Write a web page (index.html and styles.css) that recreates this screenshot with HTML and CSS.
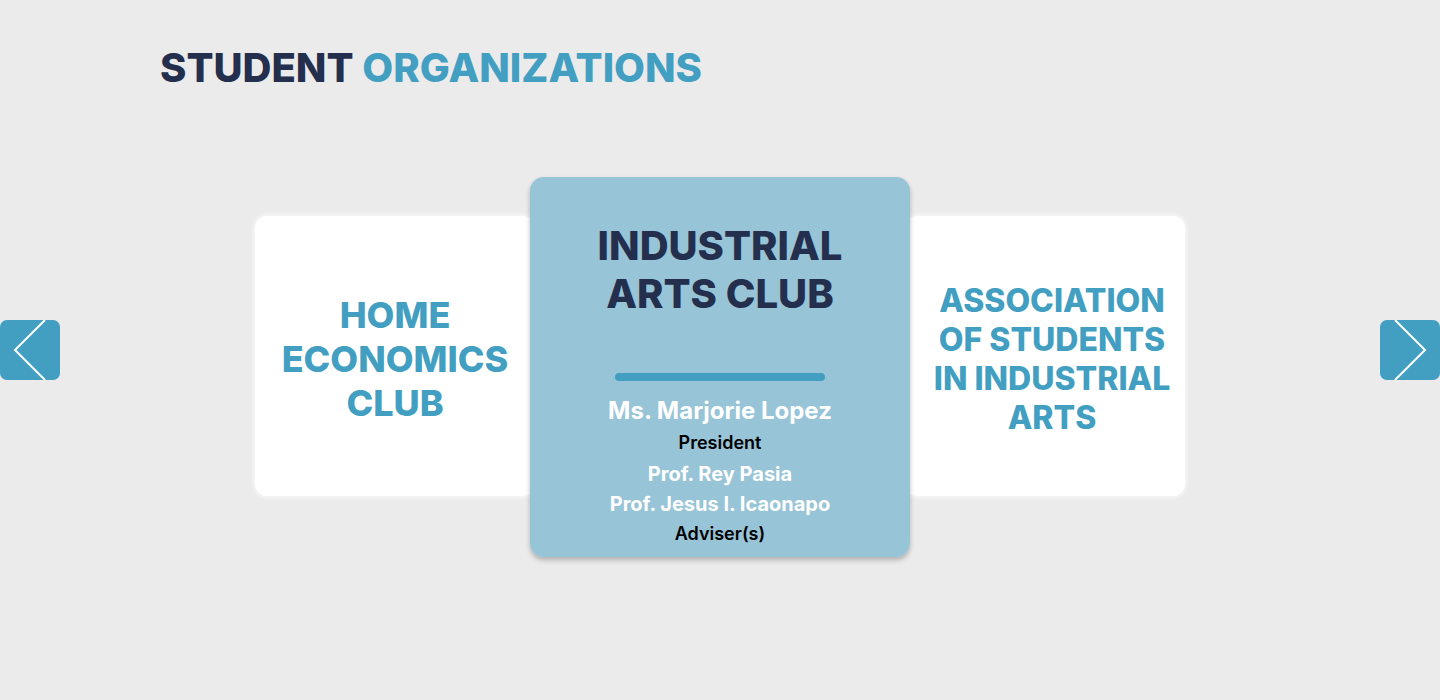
FILE: index.html
```html
<!DOCTYPE html>
<html lang="en">
<head>
    <meta charset="UTF-8">
    <meta name="viewport" content="width=device-width, initial-scale=1.0">
    <title>Student Organizations</title>
    <link rel="stylesheet" href="styles.css">
</head>
<body>
    <div class="page">
        <h1 class="page-title">STUDENT <span>ORGANIZATIONS</span></h1>

        <div class="slider">
            <button class="arrow prev" aria-label="Previous">
                <svg width="60" height="60" viewBox="0 0 60 60">
                    <polyline points="45,0 15,30 45,60" fill="none" stroke="#fff" stroke-width="2"/>
                </svg>
            </button>

            <div class="track">
                <div class="card side">
                    <h2>HOME<br>ECONOMICS<br>CLUB</h2>
                </div>

                <div class="card active">
                    <h2>INDUSTRIAL<br>ARTS CLUB</h2>
                    <div class="divider"></div>
                    <p class="name">Ms. Marjorie Lopez</p>
                    <p class="role president">President</p>
                    <p class="adviser">Prof. Rey Pasia</p>
                    <p class="adviser">Prof. Jesus I. Icaonapo</p>
                    <p class="role">Adviser(s)</p>
                </div>

                <div class="card side small">
                    <h2>ASSOCIATION<br>OF STUDENTS<br>IN INDUSTRIAL<br>ARTS</h2>
                </div>
            </div>

            <button class="arrow next" aria-label="Next">
                <svg width="60" height="60" viewBox="0 0 60 60">
                    <polyline points="15,0 45,30 15,60" fill="none" stroke="#fff" stroke-width="2"/>
                </svg>
            </button>
        </div>
    </div>
</body>
</html>
```

FILE: styles.css
```css
* {
    margin: 0;
    padding: 0;
    box-sizing: border-box;
}

body {
    font-family: Inter, "Noto Sans", sans-serif;
    background-color: #ebebeb;
    height: 700px;
    overflow: hidden;
}

.page-title {
    font-size: 40px;
    font-weight: 800;
    line-height: 54px;
    color: #232f4d;
    padding: 41px 0 0 160px;
}

.page-title span {
    color: #429fc2;
}

.slider {
    display: flex;
    align-items: flex-start;
    margin-top: 82px;
}

.arrow {
    flex: none;
    width: 60px;
    height: 60px;
    margin-top: 143px;
    background-color: #429fc2;
    border: none;
    border-radius: 7px;
    cursor: pointer;
    overflow: hidden;
}

.arrow svg {
    display: block;
}

.track {
    flex: 1;
    display: flex;
    justify-content: center;
    align-items: flex-start;
}

.card {
    text-align: center;
}

.card.side {
    width: 280px;
    height: 280px;
    margin-top: 39px;
    background-color: #fff;
    border-radius: 12px;
    box-shadow: 0 0 5px 1px rgba(255, 255, 255, 0.8);
    display: flex;
    align-items: center;
    justify-content: center;
}

.card.side h2 {
    font-size: 36px;
    font-weight: 800;
    line-height: 44px;
    color: #429fc2;
    margin-top: 5px;
}

.card.side.small {
    padding-left: 14px;
}

.card.side.small h2 {
    font-size: 32px;
    line-height: 39px;
}

.card.active {
    position: relative;
    z-index: 1;
    width: 380px;
    height: 380px;
    margin: 0 -5px;
    padding-top: 45px;
    background-color: rgba(148, 194, 214, 0.97);
    border-radius: 14px;
    box-shadow: 0 3px 5px rgba(0, 0, 0, 0.25);
}

.card.active h2 {
    font-size: 40px;
    font-weight: 800;
    line-height: 48px;
    color: #232f4d;
}

.divider {
    width: 210px;
    height: 8px;
    margin: 55px auto 0;
    background-color: #429fc2;
    border-radius: 4px;
}

.name {
    font-size: 24px;
    font-weight: 700;
    line-height: 30px;
    color: #fff;
    margin-top: 15px;
}

.role {
    font-size: 18px;
    font-weight: 600;
    line-height: 30px;
    color: #000;
}

.role.president {
    line-height: 26px;
    margin-top: 4px;
    margin-bottom: 3px;
}

.adviser {
    font-size: 20px;
    font-weight: 700;
    line-height: 30px;
    color: #fff;
}
```
